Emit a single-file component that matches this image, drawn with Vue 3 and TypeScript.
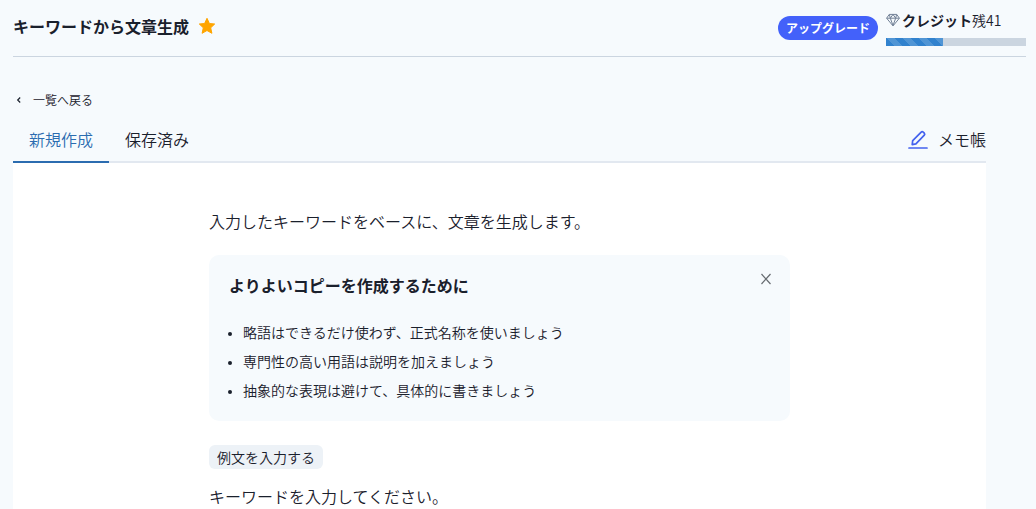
<script setup lang="ts">
import { computed, ref } from 'vue'

type TabId = 'new' | 'saved'

const tabs: { id: TabId; label: string }[] = [
  { id: 'new', label: '新規作成' },
  { id: 'saved', label: '保存済み' },
]
const tips: string[] = [
  '略語はできるだけ使わず、正式名称を使いましょう',
  '専門性の高い用語は説明を加えましょう',
  '抽象的な表現は避けて、具体的に書きましょう',
]

const activeTab = ref<TabId>('new')
const showTips = ref(true)
const credits = ref(41)
const creditLimit = 100
const creditWidth = computed(() => `${(credits.value / creditLimit) * 100}%`)
</script>

<template>
  <div class="page">
    <header class="header">
      <div class="heading">
        <h1 class="title">キーワードから文章生成</h1>
        <button class="star" type="button" aria-label="お気に入り">
          <svg viewBox="0 0 20 20" width="20" height="20" aria-hidden="true">
            <path
              d="M10 2.3l2.4 5.2 5.3.5-4 3.8 1.2 5.5-4.9-2.8-4.9 2.8 1.2-5.5-4-3.8 5.3-.5z"
              fill="#ffa500" stroke="#ffa500" stroke-width="1" stroke-linejoin="round"
            />
          </svg>
        </button>
      </div>
      <button class="upgrade" type="button">アップグレード</button>
      <div class="credit">
        <div class="credit-label">
          <svg viewBox="0 0 14 14" width="14" height="14" aria-hidden="true">
            <path
              d="M3.3 1.4h7.4L13.4 5.2 7 12.9.6 5.2zM.7 5.2h12.6M3.4 1.5l.9 3.7L7 12.5l2.7-7.3.9-3.7M4.3 5.2L7 1.5l2.7 3.7"
              fill="none" stroke="#718096" stroke-width="1" stroke-linejoin="round"
            />
          </svg>
          <span><b>クレジット</b>残{{ credits }}</span>
        </div>
        <div
          class="progress" role="progressbar" aria-label="クレジット残"
          :aria-valuenow="credits" aria-valuemin="0" :aria-valuemax="creditLimit"
        >
          <div class="progress-fill" :style="{ width: creditWidth }"></div>
        </div>
      </div>
    </header>

    <main class="main">
      <a class="back" href="#">
        <svg viewBox="0 0 12 12" width="12" height="12" aria-hidden="true">
          <path d="M7.2 3.5L4.7 6l2.5 2.5" fill="none" stroke="currentColor" stroke-width="1.2" />
        </svg>
        <span>一覧へ戻る</span>
      </a>

      <div class="tab-row">
        <div class="tabs" role="tablist">
          <button
            v-for="tab in tabs" :key="tab.id" type="button" role="tab"
            class="tab" :class="{ active: activeTab === tab.id }"
            :aria-selected="activeTab === tab.id" @click="activeTab = tab.id"
          >{{ tab.label }}</button>
        </div>
        <button class="memo" type="button">
          <svg viewBox="0 0 20 20" width="20" height="20" aria-hidden="true">
            <path
              d="M4.2 15.6l.5-3.9L13.2 3.1q1-.9 2 0l1.1 1.1q.9 1 0 2L7.9 14.8zM1 19h18"
              fill="none" stroke="#4361ee" stroke-width="1.7"
              stroke-linecap="round" stroke-linejoin="round"
            />
          </svg>
          <span>メモ帳</span>
        </button>
      </div>

      <section class="panel">
        <p>入力したキーワードをベースに、文章を生成します。</p>
        <div v-if="showTips" class="tips">
          <div class="tips-head">
            <h2 class="title">よりよいコピーを作成するために</h2>
            <button class="close" type="button" aria-label="閉じる" @click="showTips = false">
              <svg viewBox="0 0 12 12" width="12" height="12" aria-hidden="true">
                <path d="M1.5 1l9 10M10.5 1l-9 10" fill="none" stroke="#666b70" stroke-width="1.2" />
              </svg>
            </button>
          </div>
          <ul class="tips-list">
            <li v-for="tip in tips" :key="tip">{{ tip }}</li>
          </ul>
        </div>
        <button class="sample" type="button">例文を入力する</button>
        <p class="prompt">キーワードを入力してください。</p>
      </section>
    </main>
  </div>
</template>

<style>
body {
  background: #f6fafd;
}
</style>

<style scoped>
.page {
  box-sizing: border-box;
  min-height: 100vh;
  display: flex;
  flex-direction: column;
  padding: 0 10px 0 13px;
  color: #1a202c;
  background: #f6fafd;
  font-family: "Noto Sans CJK JP", sans-serif;
  font-size: 16px;
  font-weight: 350;
  line-height: 24px;
}
h1, h2, p, ul {
  margin: 0;
  padding: 0;
}
button {
  padding: 0;
  border: 0;
  background: none;
  color: inherit;
  font: inherit;
  cursor: pointer;
}
svg {
  display: block;
  flex: none;
}
.header {
  display: flex;
  align-items: center;
  height: 56px;
  border-bottom: 1px solid #cbd5e0;
}
.heading {
  display: flex;
  align-items: center;
  gap: 8px;
  padding-bottom: 4px;
}
.title {
  font-size: 16px;
  font-weight: 700;
  line-height: 24px;
}
.upgrade {
  margin-left: auto;
  padding: 0 8px;
  border-radius: 12px;
  background: #4361fa;
  color: #fff;
  font-size: 12px;
  font-weight: 700;
  line-height: 24px;
}
.credit {
  width: 140px;
  margin-left: 8px;
  padding-bottom: 2px;
}
.credit-label {
  display: flex;
  align-items: center;
  gap: 2px;
  margin-bottom: 6px;
  font-size: 14px;
}
.credit-label b {
  font-weight: 700;
}
.progress {
  height: 8px;
  background: #cbd5e0;
}
.progress-fill {
  height: 100%;
  background-color: #3182ce;
  background-image: linear-gradient(45deg, rgba(255, 255, 255, 0.15) 25%, transparent 25%, transparent 50%, rgba(255, 255, 255, 0.15) 50%, rgba(255, 255, 255, 0.15) 75%, transparent 75%, transparent);
  background-size: 16px 16px;
}
.main {
  flex: 1;
  display: flex;
  flex-direction: column;
  margin-right: 40px;
  padding-top: 31px;
}
.back {
  display: flex;
  align-items: center;
  align-self: flex-start;
  gap: 8px;
  color: inherit;
  font-size: 12px;
  text-decoration: none;
}
.tab-row {
  display: flex;
  align-items: flex-end;
  justify-content: space-between;
  margin-top: 7px;
  border-bottom: 2px solid #e2e8f0;
}
.tabs {
  display: flex;
  margin-bottom: -2px;
}
.tab {
  padding: 8px 16px 10px;
  border-bottom: 2px solid transparent;
}
.tab.active {
  border-color: #2b6cb0;
  color: #2b6cb0;
}
.memo {
  display: flex;
  align-items: center;
  gap: 10px;
  padding: 8px 0 10px;
}
.panel {
  flex: 1;
  padding: 46px 196px 0;
  background: #fff;
}
.tips {
  margin-top: 22px;
  padding: 18px 18px 16px 20px;
  border-radius: 10px;
  background: #f6fafd;
}
.tips-head {
  display: flex;
  justify-content: space-between;
}
.close {
  align-self: flex-start;
}
.tips-list {
  margin-top: 21px;
  padding-left: 14px;
  font-size: 14px;
  line-height: 29px;
}
.tips-list li::marker {
  font-family: "Liberation Sans", sans-serif;
}
.sample {
  display: block;
  margin-top: 24px;
  padding: 0 8px;
  border-radius: 6px;
  background: #edf2f7;
  font-size: 14px;
}
.prompt {
  margin-top: 15px;
}
</style>
